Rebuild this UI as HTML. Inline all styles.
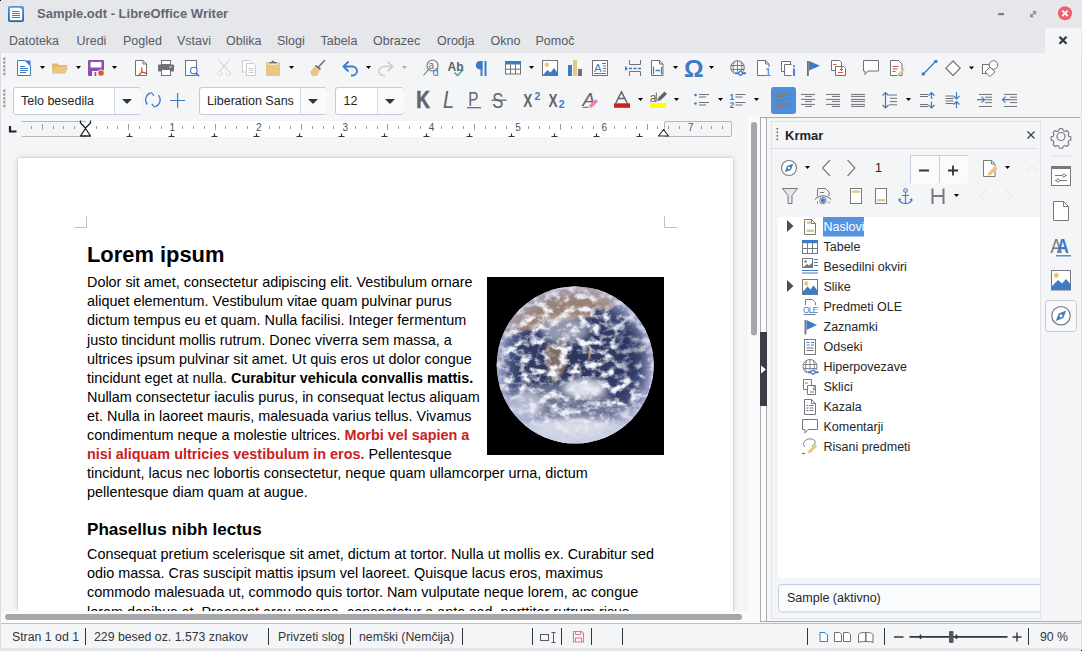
<!DOCTYPE html>
<html><head><meta charset="utf-8">
<style>
*{margin:0;padding:0;box-sizing:border-box}
html,body{width:1082px;height:651px;overflow:hidden;background:#f4f5f7;font-family:"Liberation Sans",sans-serif;position:relative}
.a{position:absolute}
.t{position:absolute;white-space:nowrap;line-height:1}
#title{left:0;top:0;width:1082px;height:53px;background:#e6e7ea}
#ttl{left:37px;top:7px;font-size:13px;font-weight:bold;color:#636773}
.menu{top:35.2px;font-size:12.5px;color:#555a67}
#docclose{left:1045px;top:28px;width:36px;height:25px;background:#f4f5f7}
#tb{left:0;top:53px;width:1082px;height:64px;background:#f4f5f7}
.combo{background:#fff;border:1px solid #c3cadb;border-radius:3px}
.combo .dd{position:absolute;top:0;bottom:0;background:#f9fafb;border-radius:0 3px 3px 0}
.combo .dv{position:absolute;top:0;bottom:0;width:1px;background:#d4d9e4}
.ui{font-size:12.5px;color:#232629}
#docarea{left:1px;top:117px;width:747px;height:494px;background:#f4f5f7}
#page{left:18px;top:158px;width:715px;height:453px;background:#fff;box-shadow:0 0 1px rgba(0,0,0,.3),0 0 6px rgba(0,0,0,.16)}
#ledge{left:0;top:53px;width:1px;height:598px;background:#dcdde0}
#vscroll{left:748px;top:117px;width:12px;height:506px;background:#fafafa}
#hscroll{left:1px;top:611px;width:747px;height:12px;background:#fafafa}
#status{left:0;top:623px;width:1082px;height:28px;background:#f4f5f7;border-top:1px solid #bcbec3}
.st{top:631px;font-size:12.3px;color:#31363b}
.sep{width:1px;height:17px;background:#31363b;top:628px}
.doc{position:absolute;left:87px;white-space:nowrap;font-size:14.4px;line-height:19.1px;color:#000}
.h1{position:absolute;left:87px;white-space:nowrap;font-size:21.9px;line-height:21.9px;font-weight:bold;color:#000}
.h2{position:absolute;left:87px;white-space:nowrap;font-size:17.1px;line-height:17.1px;font-weight:bold;color:#000}
.red{color:#c9211e;font-weight:bold}
#sbwrap{left:760px;top:117px;width:322px;height:506px;background:#f4f5f7}
#sbpanel{left:771px;top:121px;width:270px;height:498px;border:1px solid #e1e3e8;background:#f4f5f7}
#tree{left:778px;top:217px;width:262px;height:361px;background:#fff}
.tr{font-size:12.5px;color:#232629}
.kr{font-size:13px;font-weight:bold;color:#232629}
#sbot{left:0;top:648px;width:1082px;height:3px;background:#e4e5e8}
</style></head><body>
<div id="title" class="a"></div>
<div id="docclose" class="a"></div>
<div id="tb" class="a"></div>
<div class="a combo" style="left:13px;top:87px;width:128px;height:28px"><div class="dd" style="left:100px;width:27px"></div><div class="dv" style="left:100px"></div></div>
<div class="a combo" style="left:199px;top:87px;width:128px;height:28px"><div class="dd" style="left:100px;width:27px"></div><div class="dv" style="left:100px"></div></div>
<div class="a combo" style="left:335px;top:87px;width:69px;height:28px"><div class="dd" style="left:41px;width:27px"></div><div class="dv" style="left:41px"></div></div>
<div id="docarea" class="a"></div>
<div id="page" class="a"></div>
<div id="vscroll" class="a"></div>
<div id="hscroll" class="a"></div>
<div id="sbwrap" class="a"></div>
<div id="sbpanel" class="a"></div>
<div id="tree" class="a"></div>
<div id="status" class="a"></div>
<div id="sbot" class="a"></div>
<div id="ledge" class="a"></div>
<svg class="a" style="left:0;top:0" width="1082" height="651" viewBox="0 0 1082 651">
<defs>
<radialGradient id="eg" cx="0.5" cy="0.5" r="0.5">
<stop offset="0" stop-color="#2c355c"/><stop offset="0.72" stop-color="#333d68"/><stop offset="0.9" stop-color="#56608e"/><stop offset="1" stop-color="#9198c0"/>
</radialGradient>
<radialGradient id="limb" cx="0.5" cy="0.5" r="0.5">
<stop offset="0.82" stop-color="#a4a9cc" stop-opacity="0"/><stop offset="1" stop-color="#b8bcdc" stop-opacity="0.55"/>
</radialGradient>
<clipPath id="ec"><circle cx="575.2" cy="365" r="78.5"/></clipPath>
<filter id="cl" x="0" y="0" width="1" height="1">
<feTurbulence type="fractalNoise" baseFrequency="0.1 0.13" numOctaves="4" seed="5" result="n"/>
<feColorMatrix in="n" type="matrix" values="0 0 0 0 0.92  0 0 0 0 0.93  0 0 0 0 0.98  3.4 0 0 0 -1.45"/>
</filter>
<filter id="bl"><feGaussianBlur stdDeviation="3"/></filter>
<filter id="bl1"><feGaussianBlur stdDeviation="1.2"/></filter>
</defs>
<rect x="487" y="277" width="177" height="178" fill="#000"/>
<circle cx="575.2" cy="365" r="78.5" fill="url(#eg)"/>
<g clip-path="url(#ec)">
<!-- sahara band -->
<path d="M498 338c6-22 22-40 45-48 18-6 38-6 55-3l6 10c-5 6-10 12-12 20-6 2-12 0-18 2-12 2-24 4-36 8-14 4-26 8-40 11z" fill="#9a8279" filter="url(#bl1)"/>
<path d="M592 287c10 0 20 4 28 9l-8 12c-6 2-12 3-16 0l-4-12z" fill="#a08a80" filter="url(#bl1)"/>
<!-- southern africa -->
<path d="M546 345c6-2 14-2 20 0 2 8 2 18-2 26-3 6-6 10-10 12-4-4-6-10-7-17-1-7-2-14-1-21z" fill="#7d6d68" filter="url(#bl1)"/>
<path d="M590 344c2 4 2 10 0 16l-2-1c0-5 0-10 2-15z" fill="#8a7870"/>
<!-- clouds texture -->
<rect x="496" y="286" width="160" height="160" filter="url(#cl)"/>
<!-- broad white areas -->
<ellipse cx="575" cy="440" rx="80" ry="22" fill="#e9ebf3" opacity="0.9" filter="url(#bl)"/>
<ellipse cx="560" cy="405" rx="55" ry="22" fill="#dfe3ee" opacity="0.35" filter="url(#bl)"/>
<ellipse cx="585" cy="388" rx="22" ry="10" fill="#eceef5" opacity="0.85" filter="url(#bl)"/>
<ellipse cx="565" cy="330" rx="24" ry="14" fill="#e3e6ef" opacity="0.55" filter="url(#bl)"/>
<ellipse cx="528" cy="405" rx="16" ry="14" fill="#dfe2ed" opacity="0.6" filter="url(#bl)"/>
<ellipse cx="628" cy="415" rx="16" ry="10" fill="#dcdfeb" opacity="0.5" filter="url(#bl)"/>
<ellipse cx="630" cy="350" rx="14" ry="28" fill="#27305a" opacity="0.4" filter="url(#bl)"/>
<circle cx="575.2" cy="365" r="78.5" fill="url(#limb)"/>
</g>
<rect x="86" y="121" width="578" height="16" fill="#fff"/>
<path d="M22 121.5H86M22 136.5H86" stroke="#b4b6ba"/>
<rect x="664.5" y="121.5" width="67" height="15" rx="1.5" fill="none" stroke="#b4b6ba"/>
<text x="172.4" y="131.2" font-family="Liberation Sans" font-size="10" fill="#4f535b" text-anchor="middle">1</text>
<text x="258.8" y="131.2" font-family="Liberation Sans" font-size="10" fill="#4f535b" text-anchor="middle">2</text>
<text x="345.2" y="131.2" font-family="Liberation Sans" font-size="10" fill="#4f535b" text-anchor="middle">3</text>
<text x="431.6" y="131.2" font-family="Liberation Sans" font-size="10" fill="#4f535b" text-anchor="middle">4</text>
<text x="518.0" y="131.2" font-family="Liberation Sans" font-size="10" fill="#4f535b" text-anchor="middle">5</text>
<text x="604.4" y="131.2" font-family="Liberation Sans" font-size="10" fill="#4f535b" text-anchor="middle">6</text>
<text x="690.8" y="131.2" font-family="Liberation Sans" font-size="10" fill="#4f535b" text-anchor="middle">7</text>
<path d="M31.5 126v3M42.5 124v5.8M53.5 126v3M63.5 126v3M74.5 126v3M96.5 126v3M107.5 126v3M117.5 126v3M128.5 124v5.8M139.5 126v3M150.5 126v3M161.5 126v3M182.5 126v3M193.5 126v3M204.5 126v3M215.5 124v5.8M225.5 126v3M236.5 126v3M247.5 126v3M269.5 126v3M279.5 126v3M290.5 126v3M301.5 124v5.8M312.5 126v3M323.5 126v3M333.5 126v3M355.5 126v3M366.5 126v3M377.5 126v3M387.5 124v5.8M398.5 126v3M409.5 126v3M420.5 126v3M441.5 126v3M452.5 126v3M463.5 126v3M474.5 124v5.8M485.5 126v3M495.5 126v3M506.5 126v3M528.5 126v3M539.5 126v3M549.5 126v3M560.5 124v5.8M571.5 126v3M582.5 126v3M593.5 126v3M614.5 126v3M625.5 126v3M636.5 126v3M647.5 124v5.8M657.5 126v3M668.5 126v3M679.5 126v3M701.5 126v3M711.5 126v3M722.5 126v3" stroke="#9a9ca0" stroke-width="1"/>
<path d="M129.5 133.5v3.5M126.5 136.5h6M171.5 133.5v3.5M168.5 136.5h6M214.5 133.5v3.5M211.5 136.5h6M256.5 133.5v3.5M253.5 136.5h6M299.5 133.5v3.5M296.5 136.5h6M341.5 133.5v3.5M338.5 136.5h6M384.5 133.5v3.5M381.5 136.5h6M426.5 133.5v3.5M423.5 136.5h6M469.5 133.5v3.5M466.5 136.5h6M511.5 133.5v3.5M508.5 136.5h6M554.5 133.5v3.5M551.5 136.5h6M596.5 133.5v3.5M593.5 136.5h6M639.5 133.5v3.5M636.5 136.5h6" stroke="#31363b" stroke-width="1.2"/>
<path d="M80.5 120.5v2.5l5 5 5-5v-2.5" fill="none" stroke="#1f2226" stroke-width="1.3"/>
<path d="M85.5 128.5l-5 7.5h10z" fill="#fff" stroke="#1f2226" stroke-width="1.3" stroke-linejoin="round"/>
<path d="M663.5 129.5l-5 6.5h10z" fill="#fff" stroke="#1f2226" stroke-width="1.1" stroke-linejoin="round"/>
<path d="M10 126v5.5h6.5" fill="none" stroke="#1f2226" stroke-width="2.2"/>
<path d="M86.5 216v11.5H74.5M664.5 216v11.5H677" fill="none" stroke="#c0c0c0"/><!-- title icon -->
<defs><linearGradient id="tig" x1="0" y1="0" x2="0" y2="1"><stop offset="0" stop-color="#4f9bd6"/><stop offset="1" stop-color="#1b5ea8"/></linearGradient></defs>
<rect x="8" y="6" width="16" height="16" rx="2" fill="url(#tig)"/>
<path d="M9.8 7.8h10.4l2 2v10.4H9.8z" fill="#fff"/>
<path d="M20 7.8h2.2v2.2z" fill="#7cc4ee"/>
<path d="M12 11.5h7.5M12 13.5h8M12 15.5h8M12 17.5h8" stroke="#2f86d4" stroke-width="1"/>
<rect x="0" y="0" width="1" height="1" fill="#000"/><rect x="1081" y="650" width="1" height="1" fill="#000"/><rect x="1081" y="53" width="1" height="597" fill="#e3e4e7"/>
<!-- window buttons -->
<rect x="998" y="13" width="6" height="2.2" fill="#7b7f89"/>
<path d="M1030 17.3v-4l4 4zM1036.2 11v4l-4-4z" fill="#8a8e97"/>
<path d="M1031 16.3L1035.2 12" stroke="#8a8e97" stroke-width="1.2"/>
<circle cx="1065" cy="13.3" r="7" fill="#ef5f6d"/>
<path d="M1062.3 10.6l5.4 5.4M1067.7 10.6l-5.4 5.4" stroke="#fff" stroke-width="1.8"/>
<path d="M1059.5 36.8l7 7M1066.5 36.8l-7 7" stroke="#31363b" stroke-width="2.2"/>

<!-- grips -->
<g fill="#a3a6ab">
<rect x="3" y="57.5" width="2.5" height="2.5"/><rect x="3" y="61.3" width="2.5" height="2.5"/><rect x="3" y="65.1" width="2.5" height="2.5"/><rect x="3" y="68.9" width="2.5" height="2.5"/><rect x="3" y="72.7" width="2.5" height="2.5"/>
<rect x="3" y="89.5" width="2.5" height="2.5"/><rect x="3" y="93.3" width="2.5" height="2.5"/><rect x="3" y="97.1" width="2.5" height="2.5"/><rect x="3" y="100.9" width="2.5" height="2.5"/><rect x="3" y="104.7" width="2.5" height="2.5"/>
</g>

<!-- ROW 1 -->
<!-- new doc -->
<path d="M17.5 60.5h7.5l5.5 5.5v9.5h-13z" fill="#fff" stroke="#3e7bc5"/>
<path d="M25 60.5h5.5v5.5z" fill="#3e7bc5"/>
<path d="M20 66.5h5M20 68.5h8M20 70.5h8M20 72.5h6" stroke="#3e7bc5"/>
<!-- dropdown arrows -->
<g fill="#000">
<path d="M40 66h5l-2.5 3z"/><path d="M76 66h5l-2.5 3z"/><path d="M112 66h5l-2.5 3z"/>
<path d="M289 66h5l-2.5 3z"/><path d="M366 66h5l-2.5 3z"/>
<path d="M529 66h5l-2.5 3z"/><path d="M673 66h5l-2.5 3z"/><path d="M709 66h5l-2.5 3z"/>
<path d="M969 66.5h5l-2.5 3z"/>
</g>
<path d="M402 66h5l-2.5 3z" fill="#a9abae"/>
<!-- folder -->
<path d="M52 63.5h5.5l1.5 1.5h8v2.5H55.5L52.5 73.8z" fill="#e3b76c"/>
<path d="M55.5 67.3H68.2L65 73.8H52.2z" fill="#ebc683"/>
<!-- save -->
<rect x="88" y="60" width="16" height="16" rx="1" fill="#8b4fb0"/>
<rect x="90.5" y="62" width="11" height="5.5" fill="#fff"/>
<rect x="92" y="71" width="6" height="5" fill="#fff"/>
<rect x="94.5" y="72" width="1.8" height="4" fill="#8b4fb0"/>
<circle cx="101" cy="73" r="3.5" fill="#fff"/>
<circle cx="101" cy="73" r="2.8" fill="#e2553a"/>
<!-- pdf -->
<path d="M135.5 60.5h7.5l3.5 3.5v11.5h-11z" fill="#fff" stroke="#6f7174"/>
<path d="M143 60.5v3.5h3.5" fill="none" stroke="#6f7174"/>
<path d="M141.8 67.5v4.5l-3.3 3.5M141.8 72l5.5 1.5M141.8 72" stroke="#e2553a" stroke-width="1.3" fill="none"/>
<!-- print -->
<rect x="161.5" y="60.5" width="9" height="4" fill="#fff" stroke="#6f7174"/>
<rect x="158" y="64.5" width="16" height="7" rx="1" fill="#6f7174"/>
<rect x="161.5" y="69.5" width="9" height="6" fill="#fff" stroke="#6f7174"/>
<rect x="169.5" y="66.5" width="2" height="1" fill="#fff"/>
<!-- print preview -->
<rect x="185.5" y="60.5" width="11" height="15" fill="#fff" stroke="#6f7174"/>
<circle cx="193.8" cy="70.6" r="3.3" fill="#fff" stroke="#3e7bc5" stroke-width="1.1"/>
<path d="M196 73l3.3 3.3" stroke="#3e7bc5" stroke-width="1.5"/>
<!-- cut disabled -->
<path d="M219 60.5l9 10M229 60.5l-9 10" stroke="#c9cbce" stroke-width="1"/>
<circle cx="219.5" cy="73.5" r="2.2" fill="none" stroke="#c9cbce" stroke-dasharray="1.3 1"/>
<circle cx="228.5" cy="73.5" r="2.2" fill="none" stroke="#c9cbce" stroke-dasharray="1.3 1"/>
<!-- copy disabled -->
<path d="M242.5 60.5h7l2 2v9.5h-9z" fill="#fff" stroke="#c9cbce"/>
<path d="M246.5 63.5h7l2 2v10h-9z" fill="#fff" stroke="#c9cbce"/>
<path d="M248.5 68.5h5M248.5 70.5h5M248.5 72.5h5" stroke="#c9cbce"/>
<!-- paste -->
<rect x="266" y="62" width="14" height="14" rx="1" fill="#ebc683"/>
<rect x="268.5" y="61.5" width="9" height="3" fill="#fff"/>
<path d="M269 63.5h8v-1.5h-2.5a1.5 1.5 0 0 0-3 0H269z" fill="#6f7174"/>
<!-- clone brush -->
<path d="M318.5 67l6.5-7" stroke="#6f7174" stroke-width="1.5"/>
<path d="M315.5 65.5l5 4" stroke="#6f7174" stroke-width="1.8"/>
<path d="M314.5 66.5l5 4-2.5 5.5h-4.5l-1.5-1.5-0.5-3z" fill="#ebc683"/>
<!-- undo -->
<path d="M344.5 66.5h8a4.5 4.5 0 0 1 0 9h-1.5" fill="none" stroke="#3e7bc5" stroke-width="1.8"/>
<path d="M348.5 61.5l-5 5 5 5" fill="none" stroke="#3e7bc5" stroke-width="1.8"/>
<!-- redo disabled -->
<path d="M391.5 66.5h-8a4.5 4.5 0 0 0 0 9h1.5" fill="none" stroke="#cacbce" stroke-width="1.6"/>
<path d="M387.5 61.5l5 5-5 5" fill="none" stroke="#cacbce" stroke-width="1.6"/>
<!-- find replace -->
<circle cx="432.5" cy="65.5" r="5.5" fill="none" stroke="#6f7174" stroke-width="1.1"/>
<path d="M428.5 69.5l-5 6" stroke="#6f7174" stroke-width="1.1"/>
<text x="428.6" y="68.6" font-family="Liberation Sans" font-size="10" fill="#6f7174">a</text>
<text x="432.4" y="76.3" font-family="Liberation Sans" font-size="11" fill="#3e7bc5">d</text>
<!-- spelling -->
<text x="447.6" y="70.6" font-family="Liberation Sans" font-weight="bold" font-size="12" fill="#5f6164">Ab</text>
<path d="M454.5 72.5l3 3 6-6" fill="none" stroke="#4a9a80" stroke-width="1.3"/>
<!-- pilcrow -->
<path d="M481.5 61v15M485.5 61v15" stroke="#3e7bc5" stroke-width="2"/>
<path d="M488.5 61h-8.5a4.2 4.2 0 0 0 0 8.4h2.5V61z" fill="#3e7bc5"/>
<!-- table -->
<rect x="505.5" y="61.5" width="15" height="12.5" fill="#fff" stroke="#6f7174"/>
<rect x="505" y="61" width="16" height="3.5" fill="#3e7bc5"/>
<path d="M505.5 69.2h15M510.5 64.5v9.5M515.5 64.5v9.5" stroke="#6f7174"/>
<!-- image -->
<rect x="542.5" y="60.5" width="15" height="15" fill="#fff" stroke="#6f7174"/>
<circle cx="546.8" cy="64.8" r="2.2" fill="#ebc683"/>
<path d="M543 75l4.5-5 3 2.5 3.5-4.5 3 4v3z" fill="#3e7bc5"/>
<!-- chart -->
<rect x="568" y="65" width="4" height="11" fill="#3e7bc5"/>
<rect x="573" y="60" width="4" height="16" fill="#ebc683"/>
<rect x="578" y="69" width="4" height="7" fill="#6f7174"/>
<!-- text box -->
<rect x="592.5" y="60.5" width="15" height="15" fill="#fff" stroke="#6f7174"/>
<text x="594" y="72.3" font-family="Liberation Sans" font-size="11.5" fill="#3e7bc5">A</text>
<path d="M602 63.5h4M603 66h3M603 68.5h3M603 71h3" stroke="#6f7174"/>
<path d="M594 73.5h12" stroke="#6f7174"/>
<!-- page break -->
<path d="M629.5 60v4.5h11V60M629.5 76v-4.5h11V76" fill="none" stroke="#6f7174"/>
<path d="M625 66v5l3-2.5z" fill="#3e7bc5"/>
<path d="M629 68.5h3M633.5 68.5h3M638 68.5h3" stroke="#3e7bc5" stroke-width="1.5"/>
<!-- field -->
<path d="M651.5 60.5h8l3.5 3.5v11.5h-11.5z" fill="#fff" stroke="#6f7174"/>
<path d="M659.5 60.5v3.5h3.5" fill="none" stroke="#6f7174"/>
<path d="M654 67.5h-0.5v6h0.5M661 67.5h0.5v6h-0.5" fill="none" stroke="#3e7bc5" stroke-width="1.3"/>
<path d="M655.5 70.5h4.5" stroke="#3e7bc5" stroke-width="1.5"/>
<!-- omega -->
<text x="684" y="77.2" font-family="Liberation Sans" font-weight="bold" font-size="24" fill="#3e7bc5" transform="translate(684 77.2) scale(1.02 1) translate(-684 -77.2)">Ω</text>
<!-- hyperlink -->
<circle cx="737.5" cy="67.5" r="6.8" fill="none" stroke="#6f7174"/>
<path d="M730.7 65.5h13.6M731 69.5h13M737.5 60.7v13.6M734.2 61.5c-1.5 4-1.5 8 0 12M740.8 61.5c1.5 4 1.5 8 0 12" fill="none" stroke="#6f7174" stroke-width="0.9"/>
<path d="M734.5 71.5h11v3.5h-11z" fill="#f4f5f7"/>
<path d="M735 73h3l2.5-2 2.5 2h3M735 73.5h3l2.5 2 2.5-2h3" fill="none" stroke="#3e7bc5" stroke-width="1.3"/>
<!-- footnote -->
<path d="M757.5 60.5h8l3.5 3.5v11.5h-11.5z" fill="#fff" stroke="#6f7174"/>
<path d="M765.5 60.5v3.5h3.5" fill="none" stroke="#6f7174"/>
<rect x="766" y="67" width="5" height="9.5" fill="#f4f5f7"/><text x="765" y="76.3" font-family="Liberation Sans" font-size="11" fill="#3e7bc5">1</text>
<!-- caption/i -->
<path d="M781.5 61.5h9v10h-9z" fill="#fff" stroke="#6f7174"/>
<path d="M784.5 64.5h9v11h-9z" fill="#fff" stroke="#6f7174"/>
<rect x="791.5" y="64" width="5" height="12" fill="#f4f5f7"/><path d="M794 68.5v7.5" stroke="#3e7bc5" stroke-width="1.8"/><rect x="793.1" y="65.3" width="1.8" height="1.8" fill="#3e7bc5"/>
<!-- bookmark -->
<rect x="807" y="61" width="1.8" height="15" fill="#6f7174"/>
<path d="M809 61v9.5l11-4.75z" fill="#3e7bc5"/>
<!-- cross ref -->
<path d="M831.5 60.5h8l2 2v8h-10z" fill="#fff" stroke="#6f7174"/>
<path d="M835.5 66.5h8l2 2v7h-10z" fill="#fff" stroke="#6f7174"/>
<path d="M833 64.5h3.5M838 72.5h5" stroke="#e2553a" stroke-width="1.2"/>
<path d="M841.5 66v4.5l-1.5-1.5M841.5 70.5l1.5-1.5" fill="none" stroke="#6f7174"/>
<!-- comment -->
<path d="M863.5 60.5h15v10.5h-10.5l-3 3.5v-3.5h-1.5z" fill="#fff" stroke="#6f7174" stroke-linejoin="round"/>
<!-- track changes -->
<path d="M890.5 60.5h8l3.5 3.5v11.5h-11.5z" fill="#fff" stroke="#6f7174"/>
<path d="M892.5 66.5h6" stroke="#e2553a"/>
<path d="M892.5 69h5M892.5 71.5h3" stroke="#6f7174"/>
<path d="M897 74.5l6.5-6.5 1.5 1.5-6.5 6.5h-1.5z" fill="#ebc683"/>
<!-- line -->
<path d="M923.5 74l12-12.5" stroke="#3e7bc5" stroke-width="1.3"/>
<rect x="921.7" y="72.5" width="3" height="3" fill="#3e7bc5"/><rect x="934.3" y="60" width="3" height="3" fill="#3e7bc5"/>
<!-- diamond -->
<path d="M953 61l7.2 7.2-7.2 7.2-7.2-7.2z" fill="#fff" stroke="#6f7174" stroke-width="1.2"/>
<!-- shapes -->
<rect x="982.5" y="64.5" width="9" height="9" fill="#fff" stroke="#6f7174"/>
<circle cx="993.5" cy="65" r="4.3" fill="#fff" stroke="#6f7174"/>
<path d="M990 67l5 5-5 4.5-5-4.5z" fill="#fff" stroke="#6f7174"/>
<!-- ROW 2 -->
<g fill="#31363b">
<path d="M122 99h10l-5 5z"/><path d="M308 99h10l-5 5z"/><path d="M385 99h10l-5 5z"/>
</g>
<!-- refresh -->
<path d="M147.3 104.5a7.3 7.3 0 0 1 3.3-11.6" fill="none" stroke="#3e7bc5" stroke-width="1.2"/>
<path d="M158.5 95.1a7.3 7.3 0 0 1-3.3 11.6" fill="none" stroke="#3e7bc5" stroke-width="1.2"/>
<path d="M151 92.3l3 3.3M154.8 107.3l-3-3.3" stroke="#3e7bc5" stroke-width="1.2"/>
<!-- plus -->
<path d="M170.2 100.5h14.8M177.6 93.1v14.7" stroke="#3e7bc5" stroke-width="1.2"/>
<!-- B I U S -->
<text x="416.3" y="108.3" font-family="Liberation Sans" font-weight="bold" font-size="23.5" fill="#636466" stroke="#636466" stroke-width="0.6" transform="translate(416.3 108.3) scale(0.8 1) translate(-416.3 -108.3)">K</text>
<text x="443" y="108.3" font-family="Liberation Sans" font-style="italic" font-size="23.5" fill="#636466" transform="translate(443 108.3) scale(0.85 1) translate(-443 -108.3)">L</text>
<text x="468.3" y="106.3" font-family="Liberation Sans" font-size="19.5" fill="#636466" transform="translate(468.3 106.3) scale(0.78 1) translate(-468.3 -106.3)">P</text>
<path d="M467 107.7h14" stroke="#636466" stroke-width="1.2"/>
<text x="492.3" y="108.2" font-family="Liberation Sans" font-size="22.5" fill="#636466" transform="translate(492.3 108.2) scale(0.74 1) translate(-492.3 -108.2)">S</text>
<path d="M491.5 100.2h15" stroke="#636466" stroke-width="1.3"/>
<!-- super/sub -->
<text x="523.3" y="107.4" font-family="Liberation Sans" font-weight="bold" font-size="17.5" fill="#636466" transform="translate(523.3 107.4) scale(0.78 1) translate(-523.3 -107.4)">X</text>
<text x="534.5" y="100.3" font-family="Liberation Sans" font-weight="bold" font-size="10.5" fill="#3e7bc5">2</text>
<text x="548.4" y="107.4" font-family="Liberation Sans" font-weight="bold" font-size="17.5" fill="#636466" transform="translate(548.4 107.4) scale(0.78 1) translate(-548.4 -107.4)">X</text>
<text x="558.8" y="108.3" font-family="Liberation Sans" font-weight="bold" font-size="10.5" fill="#3e7bc5">2</text>
<!-- clear formatting -->
<text x="582.5" y="106" font-family="Liberation Sans" font-style="italic" font-size="19" fill="#636466">A</text>
<path d="M582.5 107.3h6" stroke="#636466"/>
<path d="M588.5 106l7-7 2.5 2.5-7 7z" fill="#eb8aa1"/>
<path d="M589 106.5l2 2" stroke="#f4f5f7" stroke-width="1"/>
<!-- font color -->
<path d="M615.8 103l5.7-11 5.7 11M618 98.5h7" fill="none" stroke="#636466" stroke-width="1.5"/>
<rect x="614" y="103.3" width="16" height="4.5" fill="#c9211e"/>
<path d="M638 98h5l-2.5 3z" fill="#000"/>
<!-- highlight -->
<text x="649.8" y="101.6" font-family="Liberation Sans" font-size="12" fill="#636466">a</text>
<path d="M656.3 92.5v8" stroke="#636466"/>
<path d="M657 101.5l1.5-4 6-6 2.5 2.5-6 6z" fill="#636466"/>
<rect x="650" y="103" width="16" height="5" fill="#ffff00"/>
<path d="M674 98h5l-2.5 3z" fill="#000"/>
<!-- bullets -->
<circle cx="695.5" cy="95" r="1.3" fill="#3e7bc5"/><circle cx="695.5" cy="103.5" r="1.3" fill="#3e7bc5"/>
<path d="M699 94.5h10M699 97h7M699 102.5h10M699 105h7" stroke="#6f7174"/>
<path d="M718 98h5l-2.5 3z" fill="#000"/>
<!-- numbering -->
<text x="729.5" y="99.6" font-family="Liberation Sans" font-size="8.5" font-weight="bold" fill="#3e7bc5">1</text>
<text x="729.5" y="108" font-family="Liberation Sans" font-size="8.5" font-weight="bold" fill="#3e7bc5">2</text>
<path d="M735.5 94.5h10M735.5 97h7M735.5 102.5h10M735.5 105h7" stroke="#6f7174"/>
<path d="M754 98h5l-2.5 3z" fill="#000"/>
<!-- align active -->
<rect x="771" y="87" width="25" height="27" rx="3" fill="#4d8fdd"/>
<path d="M776 94.4h14M776 96.4h8M776 99.4h14M776 101.4h8M776 104.4h14M776 106.4h8" stroke="#7e7b75" stroke-width="1"/>
<path d="M801 94.4h14M805 96.4h7M801 99.4h14M805 101.4h7M801 104.4h14M805 106.4h7" stroke="#6f7174"/>
<path d="M826 94.4h14M832 96.4h8M826 99.4h14M832 101.4h8M826 104.4h14M832 106.4h8" stroke="#6f7174"/>
<path d="M851 94.4h14M851 96.4h14M851 99.4h14M851 101.4h14M851 104.4h14M851 106.4h14" stroke="#6f7174"/>
<!-- line spacing -->
<path d="M885.5 92.5v15.5M882.5 95.5l3-3 3 3M882.5 105l3 3 3-3" fill="none" stroke="#3e7bc5" stroke-width="1.2"/>
<path d="M889 95h8M890 98.3h7M890 101.6h7M889 104.8h8" stroke="#6f7174"/>
<path d="M906 98h5l-2.5 3z" fill="#000"/>
<!-- inc para spacing -->
<path d="M920 94.5h8M920 96.5h8M920 104.5h8M920 106.5h8" stroke="#6f7174"/>
<path d="M931.5 92.5v6.5M928.5 95.5l3-3 3 3M931.5 101.5v6.5M928.5 105l3 3 3-3" fill="none" stroke="#3e7bc5" stroke-width="1.2"/>
<!-- dec para spacing -->
<path d="M945.5 96h8M945.5 98.5h8M945.5 101h8M945.5 103.5h8" stroke="#6f7174"/>
<path d="M956.5 92v7M953.5 96l3 3 3-3M956.5 101.5v6.5M953.5 104.5l3-3 3 3" fill="none" stroke="#3e7bc5" stroke-width="1.2"/>
<!-- indent -->
<path d="M979 94.4h13M985 97.2h7M985 99.8h7M985 102.6h7M979 106.5h13" stroke="#6f7174"/>
<path d="M977 99.7h7.5M981.5 96.7l3 3-3 3" fill="none" stroke="#3e7bc5" stroke-width="1.2"/>
<path d="M1004 94.4h13M1010 97.2h7M1010 99.8h7M1010 102.6h7M1004 106.5h13" stroke="#6f7174"/>
<path d="M1010 99.7h-7.5M1005.5 96.7l-3 3 3 3" fill="none" stroke="#3e7bc5" stroke-width="1.2"/>
<!-- sidebar frame -->
<rect x="761" y="117" width="5.5" height="504.5" fill="#fbfbfc"/>
<path d="M760.5 117v504.5M766.5 117.5v504M760 117.5h320.5M760 621.5h322" fill="none" stroke="#a9abaf"/>
<rect x="760" y="332" width="7" height="74" fill="#3b3e46"/>
<path d="M761 365.5l5 4-5 4z" fill="#fff"/>
<!-- v scrollbar thumb -->
<rect x="751" y="122" width="6" height="213.5" rx="3" fill="#a5a7ab"/>
<!-- h scrollbar thumb -->
<rect x="5" y="614" width="737" height="6" rx="3" fill="#a5a7ab"/>
<!-- panel title -->
<g fill="#6b6e73"><rect x="776.5" y="128" width="1.6" height="1.6"/><rect x="776.5" y="131.5" width="1.6" height="1.6"/><rect x="776.5" y="135" width="1.6" height="1.6"/><rect x="776.5" y="138.5" width="1.6" height="1.6"/></g>
<path d="M772 148.5h266" stroke="#dcdee3"/>
<path d="M1027.5 131.5l7 7M1034.5 131.5l-7 7" stroke="#31363b" stroke-width="1.1"/>
<!-- nav row 1 -->
<circle cx="789" cy="168" r="7.5" fill="#fff" stroke="#77797d" stroke-width="1.1"/>
<path d="M784.8 172.2L790.9 169.9L793.2 163.8L787.1 166.1Z" fill="#3e7bc5"/>
<circle cx="789" cy="168" r="1.2" fill="#fff"/>
<path d="M805 166h5l-2.5 3z" fill="#000"/>
<path d="M830 160l-7.5 8 7.5 8M847.5 160l7.5 8-7.5 8" fill="none" stroke="#77797d" stroke-width="1.1"/>
<!-- spin -->
<rect x="910.5" y="155.5" width="57" height="28" fill="#fbfbfc"/>
<path d="M910.5 183v-27.5h57M939.5 156v27" fill="none" stroke="#c5cde0"/>
<path d="M919 170.5h10M948 170.5h10M953 165.5v10" stroke="#31363b" stroke-width="1.8"/>
<!-- edit doc -->
<path d="M983.5 160.5h8l3.5 3.5v12.5h-11.5z" fill="#fff" stroke="#77797d"/>
<path d="M991.5 160.5v3.5h3.5" fill="none" stroke="#77797d"/>
<path d="M987.5 176l1-3.5 6.5-6.5 2.5 2.5-6.5 6.5z" fill="#ebc683"/>
<path d="M1005 166h5l-2.5 3z" fill="#000"/>
<path d="M1025 172.5l7-6.5 7 6.5" fill="none" stroke="#e3e5e8"/>
<!-- nav row 2 -->
<path d="M782.5 188.5h15l-5.5 7v8h-4v-8z" fill="#e4e5e7" stroke="#77797d" stroke-linejoin="round"/>
<path d="M817.5 189v7M817.5 188.5h8l3.5 3.5v4" fill="none" stroke="#77797d"/>
<path d="M820 192.5h4" stroke="#77797d"/>
<path d="M815 199.5c4-5 12-5 16 0" fill="none" stroke="#77797d" stroke-width="1.1"/>
<path d="M817.5 203.5v-2M829 203.5v-2" stroke="#77797d"/>
<circle cx="823" cy="200.5" r="3.3" fill="#fff" stroke="#77797d"/>
<circle cx="823" cy="200.5" r="2.2" fill="#3e7bc5"/>
<rect x="850.5" y="188.5" width="11" height="15" fill="#fff" stroke="#77797d"/>
<rect x="852" y="190.5" width="8" height="2.3" fill="#ebc683"/>
<rect x="875.5" y="188.5" width="11" height="15" fill="#fff" stroke="#77797d"/>
<rect x="877" y="199" width="8" height="2.5" fill="#ebc683"/>
<circle cx="905.5" cy="190.5" r="1.8" fill="none" stroke="#3e7bc5" stroke-width="1.1"/>
<path d="M905.5 192.5v11M902 195.5h7M899 199.5c1 3 3.5 4 6.5 4s5.5-1 6.5-4M898.5 200.5l1-1.5 1.5 1M912.5 200.5l-1-1.5-1.5 1" fill="none" stroke="#3e7bc5" stroke-width="1.1"/>
<path d="M932.5 188.5v15.5M943.5 188.5v15.5M932.5 196h11" stroke="#77797d" stroke-width="2"/>
<path d="M954 194h5l-2.5 3z" fill="#000"/>
<path d="M987 189l-6.5 6.5 6.5 6.5M1005 189l6.5 6.5-6.5 6.5" fill="none" stroke="#e3e5e8"/>
<!-- tree expanders -->
<path d="M787 220l6.5 6-6.5 6z" fill="#4d4f55"/>
<path d="M787 280l6.5 6-6.5 6z" fill="#4d4f55"/>
<!-- selection -->
<rect x="823" y="217" width="41" height="19.5" fill="#5294e2"/>
<!-- tree icons -->
<path d="M804.5 219.5h7l4 4v11h-11z" fill="#fff" stroke="#77797d"/>
<path d="M811.5 219.5v4h4" fill="none" stroke="#77797d"/>
<rect x="807" y="221.5" width="4" height="2.5" fill="#ebc683"/><rect x="806.5" y="229.5" width="7.5" height="2.5" fill="#ebc683"/>
<rect x="802.5" y="240.5" width="15" height="13" fill="#fff" stroke="#77797d"/>
<rect x="802" y="240" width="16" height="3.2" fill="#3e7bc5"/>
<path d="M802.5 248.5h15M807.5 243v10.5M812.5 243v10.5" stroke="#77797d"/>
<rect x="802.5" y="258.5" width="10" height="9" fill="#fff" stroke="#77797d"/>
<circle cx="805.5" cy="261.5" r="1.2" fill="#77797d"/>
<path d="M803 267.5l4-3.5 2 1.5 3.5-3v5z" fill="#77797d"/>
<path d="M814 259.5h4M814 262.5h4M814 265.5h4M802 270.5h16M802 273h16" stroke="#3e7bc5"/>
<rect x="802.5" y="279.5" width="15" height="15" fill="#fff" stroke="#77797d"/>
<circle cx="806.3" cy="283.5" r="2.2" fill="#ebc683"/>
<path d="M803 294.5v-3l4.5-5 3 3 3-4 4 5v4z" fill="#3e7bc5"/>
<path d="M805.5 305v-5.5h7l3 3v2.5" fill="none" stroke="#77797d"/>
<text x="803" y="313.3" font-family="Liberation Sans" font-size="8.3" fill="#3e7bc5" textLength="15">OLE</text>
<path d="M803.5 314.5h12" stroke="#77797d"/>
<rect x="804.5" y="320" width="1.8" height="14.5" fill="#77797d"/>
<path d="M806.5 320v10l10.5-5z" fill="#3e7bc5"/>
<rect x="804.5" y="339.5" width="11" height="15" fill="#fff" stroke="#77797d"/>
<path d="M806.5 342.5h3M811 342.5h3M806.5 345h3M811 345h3" stroke="#3e7bc5"/>
<path d="M806.5 348h7M806.5 350.5h7" stroke="#77797d"/>
<circle cx="810" cy="366.5" r="7" fill="none" stroke="#77797d"/>
<path d="M803 364.5h14M803.5 368.5h13M810 359.5v14M806.7 360.3c-1.5 4-1.5 8.4 0 12.4M813.3 360.3c1.5 4 1.5 8.4 0 12.4" fill="none" stroke="#77797d" stroke-width="0.9"/>
<path d="M807 370.5h12v5h-12z" fill="#fff"/>
<path d="M807.5 372h3l2.5-2 2.5 2h3M807.5 372.5h3l2.5 2 2.5-2h3" fill="none" stroke="#3e7bc5" stroke-width="1.3"/>
<path d="M803.5 379.5h8v10h-8z" fill="#fff" stroke="#77797d"/>
<path d="M807.5 385.5h8v9h-8z" fill="#fff" stroke="#77797d"/>
<path d="M805 383h3M810 392h4" stroke="#e2553a" stroke-width="1.2"/>
<path d="M814 386v4l-1.2-1.2M814 390l1.2-1.2" fill="none" stroke="#77797d"/>
<path d="M804.5 399.5h7l4 4v11h-11z" fill="#fff" stroke="#77797d"/>
<path d="M811.5 399.5v4h4" fill="none" stroke="#77797d"/>
<path d="M806.5 405.5h2M806.5 408h2M806.5 410.5h2" stroke="#3e7bc5"/>
<path d="M809.5 405.5h4M809.5 408h4M809.5 410.5h4" stroke="#77797d"/>
<path d="M802.5 419.5h15v10h-9.5l-3 3.5v-3.5h-2.5z" fill="#fff" stroke="#77797d" stroke-linejoin="round"/>
<path d="M805 447c-2-2-2-5 1-7s8-1 9 1-1 4-3 5" fill="none" stroke="#77797d"/>
<path d="M802 453.5h3" stroke="#77797d" stroke-width="1.3"/>
<path d="M807.5 453.5l1-3 6.5-6.5 2.3 2.3-6.5 6.5z" fill="#ebc683"/>
<!-- combo bottom -->
<path d="M1040 584.5H781.5a3 3 0 0 0-3 3v21.5a3 3 0 0 0 3 3H1040" fill="#fafbfc" stroke="#c5cde0"/>
<!-- tab bar -->
<circle cx="1061" cy="136.5" r="4" fill="none" stroke="#77797d" stroke-width="1.2"/>
<path d="M1061 128.5l1.6 0.2 0.6 2 1.8 0.8 1.8-1 2.2 2.2-1 1.8 0.8 1.8 2 0.6v3.2l-2 0.6-0.8 1.8 1 1.8-2.2 2.2-1.8-1-1.8 0.8-0.6 2h-3.2l-0.6-2-1.8-0.8-1.8 1-2.2-2.2 1-1.8-0.8-1.8-2-0.6v-3.2l2-0.6 0.8-1.8-1-1.8 2.2-2.2 1.8 1 1.8-0.8 0.6-2z" fill="none" stroke="#77797d" stroke-width="1.1" stroke-linejoin="round"/>
<path d="M1050 156h22" stroke="#dcdee3"/>
<rect x="1051.5" y="166.5" width="19" height="19" fill="#fff" stroke="#77797d"/>
<rect x="1051" y="166" width="20" height="3" fill="#77797d"/>
<path d="M1055 175.5h12M1055 180.5h12" stroke="#77797d"/>
<circle cx="1064" cy="175.5" r="1.5" fill="#fff" stroke="#77797d"/><circle cx="1058" cy="180.5" r="1.5" fill="#fff" stroke="#77797d"/>
<path d="M1053.5 201.5h10l5 5v14h-15z" fill="#fff" stroke="#77797d"/>
<path d="M1063.5 201.5v5h5" fill="none" stroke="#77797d"/>
<text x="1050.5" y="253" font-family="Liberation Sans" font-size="20" fill="#77797d" transform="translate(1050.5 253) scale(0.85 1) translate(-1050.5 -253)">A</text>
<text x="1056.5" y="253" font-family="Liberation Sans" font-weight="bold" font-size="20" fill="#3e7bc5" transform="translate(1056.5 253) scale(0.85 1) translate(-1056.5 -253)">A</text>
<path d="M1056 255.8h15" stroke="#3e7bc5" stroke-width="1.3"/>
<rect x="1051.5" y="270.5" width="19" height="19.5" fill="#fff" stroke="#77797d"/>
<circle cx="1056.3" cy="275.3" r="2.5" fill="#ebc683"/>
<path d="M1052 290v-4l6-6 4 3.5 4-4.5 4.5 5v6z" fill="#3e7bc5"/>
<rect x="1045.5" y="300.5" width="31" height="31" rx="3" fill="#f7f8f9" stroke="#c9cbd0"/>
<circle cx="1061" cy="315.7" r="9.2" fill="#fff" stroke="#77797d" stroke-width="1.2"/>
<path d="M1055.8 320.9L1063.3 318L1066.2 310.5L1058.7 313.4Z" fill="#3e7bc5"/>
<circle cx="1061" cy="315.7" r="1.5" fill="#fff"/>
<!-- status icons -->
<rect x="540.5" y="634.5" width="8" height="6" fill="none" stroke="#55585e"/>
<path d="M553.5 632.5v10M551.5 632.5h4M551.5 642.5h4" stroke="#55585e"/>
<path d="M573.5 631.5h8l2 2v8.5h-10z" fill="none" stroke="#e07a8c" stroke-width="1.1"/>
<path d="M575.5 631.5v3h5v-3M575.5 642v-4h6v4" fill="none" stroke="#e07a8c"/>
<path d="M820 632.5h5l2.5 2.5v6.5H820z" fill="#fff" stroke="#3e7bc5"/>
<path d="M834.5 632.5h5l2 2v7h-7zM843.5 632.5h5l2 2v7h-7z" fill="#fff" stroke="#6f7174"/>
<path d="M858.5 634.5c1-1.5 3-2 7.5-2v9c-4 0-6.5 0.3-7.5 1z M865.5 632.5c4.5 0 6.5 0.5 7.5 2v8c-1-0.7-3.5-1-7.5-1z" fill="#fff" stroke="#6f7174"/>
<path d="M894 637h9.5M1012.5 637h9M1017 632.5v9" stroke="#31363b" stroke-width="1.4"/>
<path d="M909.5 636.8h98" stroke="#31363b" stroke-width="1.8"/>
<path d="M920.5 634.5v4.5M956.5 634.5v4.5" stroke="#31363b" stroke-width="1.6"/>
<rect x="949" y="631" width="4.5" height="12" rx="1" fill="#55585e"/>

</svg>
<div id="ttl" class="t">Sample.odt - LibreOffice Writer</div>
<div class="t menu" style="left:9px">Datoteka</div>
<div class="t menu" style="left:76.5px">Uredi</div>
<div class="t menu" style="left:123px">Pogled</div>
<div class="t menu" style="left:177px">Vstavi</div>
<div class="t menu" style="left:226px">Oblika</div>
<div class="t menu" style="left:277px">Slogi</div>
<div class="t menu" style="left:320.5px">Tabela</div>
<div class="t menu" style="left:373px">Obrazec</div>
<div class="t menu" style="left:437px">Orodja</div>
<div class="t menu" style="left:490.5px">Okno</div>
<div class="t menu" style="left:535.5px">Pomoč</div>
<div class="t ui" style="left:21px;top:94.5px">Telo besedila</div>
<div class="t ui" style="left:207px;top:94.5px">Liberation Sans</div>
<div class="t ui" style="left:343.5px;top:94.5px">12</div>

<div class="h1" style="top:244.3px">Lorem ipsum</div>
<div class="doc" style="top:273.3px">Dolor sit amet, consectetur adipiscing elit. Vestibulum ornare<br>aliquet elementum. Vestibulum vitae quam pulvinar purus<br>dictum tempus eu et quam. Nulla facilisi. Integer fermentum<br>justo tincidunt mollis rutrum. Donec viverra sem massa, a<br>ultrices ipsum pulvinar sit amet. Ut quis eros ut dolor congue<br>tincidunt eget at nulla. <b>Curabitur vehicula convallis mattis.</b><br>Nullam consectetur iaculis purus, in consequat lectus aliquam<br>et. Nulla in laoreet mauris, malesuada varius tellus. Vivamus<br>condimentum neque a molestie ultrices. <span class="red">Morbi vel sapien a</span><br><span class="red">nisi aliquam ultricies vestibulum in eros.</span> Pellentesque<br>tincidunt, lacus nec lobortis consectetur, neque quam ullamcorper urna, dictum<br>pellentesque diam quam at augue.</div>
<div class="h2" style="top:521.2px">Phasellus nibh lectus</div>
<div class="a" style="left:0;top:0;width:734px;height:611px;overflow:hidden">
<div class="doc" style="top:545.3px">Consequat pretium scelerisque sit amet, dictum at tortor. Nulla ut mollis ex. Curabitur sed<br>odio massa. Cras suscipit mattis ipsum vel laoreet. Quisque lacus eros, maximus<br>commodo malesuada ut, commodo quis tortor. Nam vulputate neque lorem, ac congue<br>lorem dapibus et. Praesent arcu magna, consectetur a ante sed, porttitor rutrum risus.</div>
</div>

<div class="t kr" style="left:785px;top:128.5px">Krmar</div>
<div class="t tr" style="left:875px;top:161.5px">1</div>
<div class="t tr" style="left:823.5px;top:220.5px;color:#fff">Naslovi</div>
<div class="t tr" style="left:823.5px;top:240.5px">Tabele</div>
<div class="t tr" style="left:823.5px;top:260.5px">Besedilni okviri</div>
<div class="t tr" style="left:823.5px;top:280.5px">Slike</div>
<div class="t tr" style="left:823.5px;top:300.5px">Predmeti OLE</div>
<div class="t tr" style="left:823.5px;top:320.5px">Zaznamki</div>
<div class="t tr" style="left:823.5px;top:340.5px">Odseki</div>
<div class="t tr" style="left:823.5px;top:360.5px">Hiperpovezave</div>
<div class="t tr" style="left:823.5px;top:380.5px">Sklici</div>
<div class="t tr" style="left:823.5px;top:400.5px">Kazala</div>
<div class="t tr" style="left:823.5px;top:420.5px">Komentarji</div>
<div class="t tr" style="left:823.5px;top:440.5px">Risani predmeti</div>
<div class="t tr" style="left:787px;top:592px">Sample (aktivno)</div>

<div class="t st" style="left:12px">Stran 1 od 1</div>
<div class="a sep" style="left:85px"></div>
<div class="t st" style="left:94px">229 besed oz. 1.573 znakov</div>
<div class="a sep" style="left:268px"></div>
<div class="t st" style="left:278px">Privzeti slog</div>
<div class="a sep" style="left:350px"></div>
<div class="t st" style="left:359px">nemški (Nemčija)</div>
<div class="a sep" style="left:462px"></div>
<div class="a sep" style="left:532px"></div>
<div class="a sep" style="left:561px"></div>
<div class="a sep" style="left:591px"></div>
<div class="a sep" style="left:622px"></div>
<div class="a sep" style="left:807px"></div>
<div class="a sep" style="left:884px"></div>
<div class="a sep" style="left:1028px"></div>
<div class="t st" style="left:1040px">90 %</div>
</body></html>
